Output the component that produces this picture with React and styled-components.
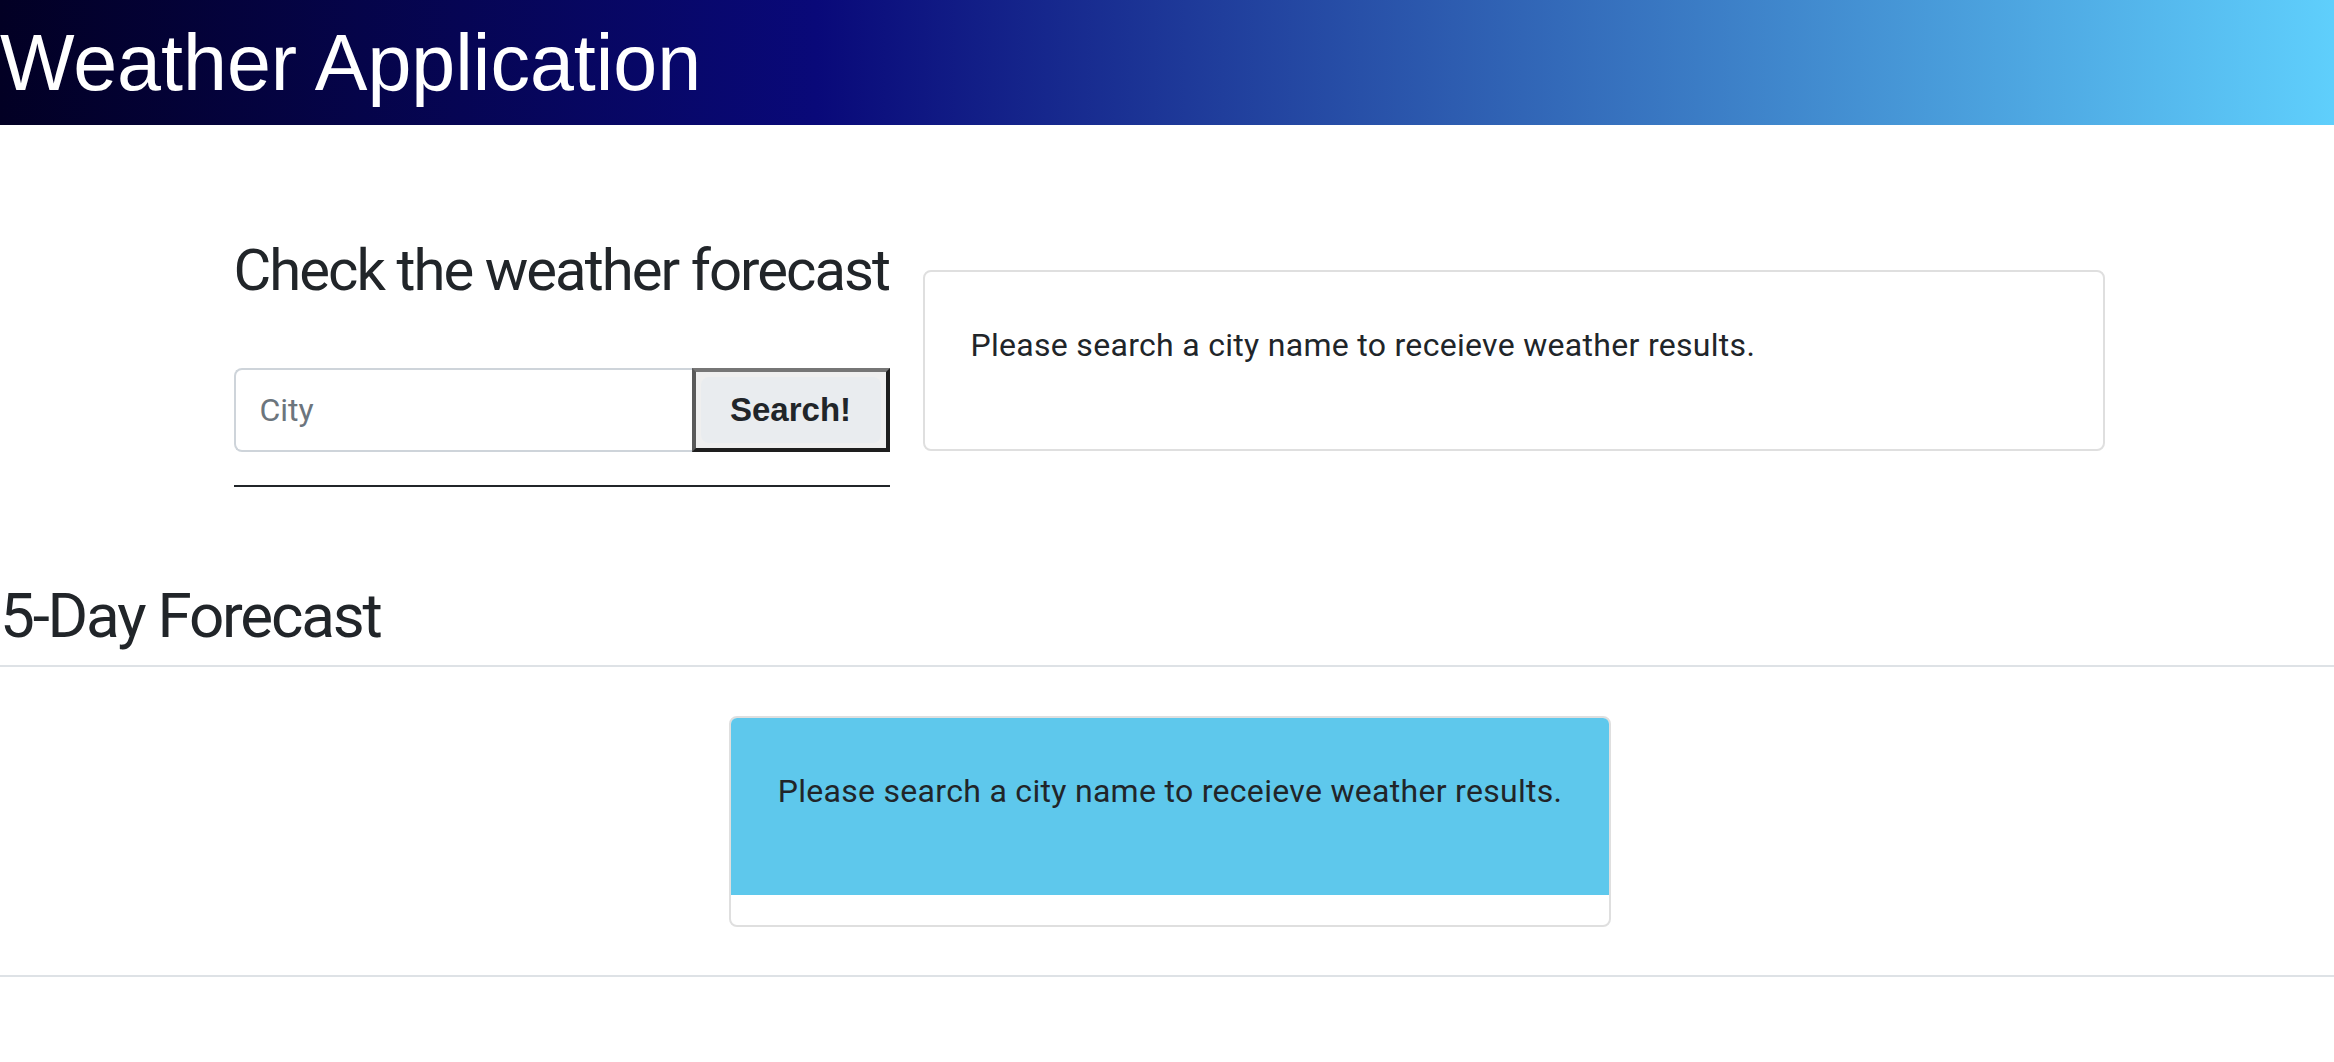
import React from 'react';
import styled, { createGlobalStyle } from 'styled-components';

const GlobalStyle = createGlobalStyle`
  html, body {
    margin: 0;
    padding: 0;
    background: #fff;
  }
  body {
    font-family: Roboto, "Liberation Sans", Arial, sans-serif;
    color: #212529;
  }
  * {
    box-sizing: border-box;
  }
`;

const Header = styled.header`
  height: 125px;
  display: flex;
  align-items: center;
  background: linear-gradient(
    90deg,
    rgb(2, 0, 36) 0%,
    rgb(9, 9, 121) 35%,
    rgb(95, 207, 252) 100%
  );
`;

const Title = styled.h1`
  margin: 0;
  font-family: "Liberation Sans", Arial, sans-serif;
  font-weight: 400;
  font-size: 79px;
  line-height: 1;
  color: #fff;
`;

const Container = styled.main`
  width: 1875px;
  margin: 0 auto;
  padding: 111px 0 0 4px;
`;

const SearchRow = styled.section`
  display: flex;
  align-items: flex-start;
  gap: 33px;
`;

const SearchColumn = styled.div`
  width: 656px;
  flex: none;
`;

const Heading = styled.h2`
  margin: 0 0 ${p => p.$gap || 0}px;
  font-weight: 400;
  font-size: ${p => p.$size || 64}px;
  line-height: 1.2;
  letter-spacing: ${p => p.$tight || 0}px;
  white-space: nowrap;
`;

const InputGroup = styled.form`
  display: flex;
  height: 84px;
  margin: 0;
`;

const CityInput = styled.input`
  flex: 1;
  min-width: 0;
  height: 100%;
  padding: 0 24px;
  border: 2px solid #ced4da;
  border-right: none;
  border-radius: 8px 0 0 8px;
  font-family: inherit;
  font-size: 32px;
  color: #212529;
  outline: none;

  &::placeholder {
    color: #6c757d;
  }
`;

const SearchButton = styled.button`
  flex: none;
  width: 198px;
  height: 100%;
  padding: 5px;
  background: #efefef;
  border-style: solid;
  border-width: 4px;
  border-color: #767676 #1e1e1e #1e1e1e #5a5a5a;
  display: flex;
  cursor: pointer;
`;

const ButtonLabel = styled.span`
  flex: 1;
  display: flex;
  align-items: center;
  justify-content: center;
  background: #e9ecef;
  border-radius: 8px;
  font-family: inherit;
  font-weight: 700;
  font-size: 33px;
  color: #212529;
`;

const Rule = styled.hr`
  margin: ${p => p.$top || 0}px 0 0;
  border: none;
  border-top: 2px solid ${p => p.$color || '#212529'};
`;

const Card = styled.div`
  border: 2px solid #dfdfdf;
  border-radius: 8px;
  background: #fff;
  overflow: hidden;
`;

const ResultCard = styled(Card)`
  flex: 1;
  margin-top: 34px;
`;

const CardBody = styled.div`
  padding: 49px ${p => (p.$center ? 16 : 46)}px 80px;
  background: ${p => p.$bg || 'transparent'};
  text-align: ${p => (p.$center ? 'center' : 'left')};
`;

const CardText = styled.p`
  margin: 0;
  font-size: 32px;
  line-height: 48px;
  letter-spacing: 0.3px;
  white-space: nowrap;
`;

const CardFoot = styled.div`
  height: 30px;
`;

const Forecast = styled.section`
  margin-top: 92px;
`;

const ForecastRow = styled.div`
  display: flex;
  justify-content: center;
  padding: 49px 0 48px 6px;
`;

const ForecastCard = styled(Card)`
  width: 882px;
`;

const message = 'Please search a city name to receieve weather results.';

export default function App() {
  return (
    <>
      <GlobalStyle />
      <Header>
        <Title>Weather Application</Title>
      </Header>
      <Container>
        <SearchRow>
          <SearchColumn>
            <Heading $gap={62} $size={58} $tight={-1.95}>
              Check the weather forecast
            </Heading>
            <InputGroup onSubmit={e => e.preventDefault()}>
              <CityInput type="text" placeholder="City" />
              <SearchButton type="submit">
                <ButtonLabel>Search!</ButtonLabel>
              </SearchButton>
            </InputGroup>
            <Rule $top={33} />
          </SearchColumn>
          <ResultCard>
            <CardBody>
              <CardText>{message}</CardText>
            </CardBody>
          </ResultCard>
        </SearchRow>
      </Container>
      <Forecast>
        <Heading $gap={12} $size={62} $tight={-2.2}>
          5-Day Forecast
        </Heading>
        <Rule $color="#dee2e6" />
        <ForecastRow>
          <ForecastCard>
            <CardBody $bg="#5ec8ec" $center>
              <CardText>{message}</CardText>
            </CardBody>
            <CardFoot />
          </ForecastCard>
        </ForecastRow>
        <Rule $color="#dee2e6" />
      </Forecast>
    </>
  );
}
